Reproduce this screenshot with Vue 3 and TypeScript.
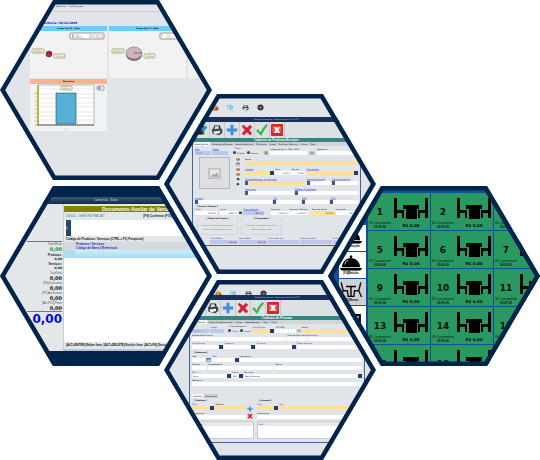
<script setup lang="ts">
import { h, type FunctionalComponent } from 'vue'

type Kind = 'text' | 'select' | 'lookup' | 'gap' | 'radios' | 'icon'
interface Field {
  w: number
  kind: Kind
  label?: string
  tone?: string
  value?: string
  link?: boolean
  options?: string[]
}

const f = (w: number, label: string, kind: Kind = 'text', tone = '', value = '', link = false): Field => ({ w, kind, label, tone, value, link })
const gap = (w: number): Field => ({ w, kind: 'gap' })
const icon = (w: number, name: string): Field => ({ w, kind: 'icon', value: name })
const radios = (w: number, label: string, options: string[]): Field => ({ w, kind: 'radios', label, options })

const FieldRow: FunctionalComponent<{ fields: Field[] }> = (props) =>
  h('div', { class: 'frow' }, props.fields.map((field) => {
    const style = { flexGrow: field.w }
    if (field.kind === 'gap') return h('span', { class: 'cell', style })
    if (field.kind === 'icon') {
      return h('span', { class: 'cell mini', style }, [h('svg', { viewBox: '0 0 16 16' }, [h('use', { href: '#' + field.value })])])
    }
    if (field.kind === 'radios') {
      return h('fieldset', { class: 'cell radios', style }, [
        h('legend', field.label),
        h('div', (field.options ?? []).map((o, i) =>
          h('label', [h('input', { type: 'radio', name: field.label, checked: i === 0 }), o]))),
      ])
    }
    const control = field.kind === 'select'
      ? h('select', { class: field.tone }, [h('option', field.value)])
      : h('input', { class: [field.tone, field.kind], type: 'text', value: field.value })
    return h('label', { class: ['cell', { link: field.link }], style }, [h('span', field.label), control])
  }))
FieldRow.props = ['fields']

const productHead: Field[] = [
  f(16, 'Item', 'text', 'blue', '  1 / 7', true), f(16, 'Código', 'text', 'blue', '', true), gap(2),
  radios(27, '[ Tipo ]', ['Produto', 'Serviço']), gap(1), icon(7, 'box'),
  f(37, 'Código de Barra / EAN / GTIN'), icon(8, 'card'), f(39, 'Referência'), gap(1),
]
const productMain: Field[][] = [
  [f(114, 'Nome', 'text', 'yellow')],
  [f(29, 'Unidade', 'select', 'yellow', '', true), f(15, 'Peso', 'text', 'right', '0,0000'), f(14, 'Volume', 'text', 'right', '0,0000'), f(51, 'Tipo do Item', 'select', 'yellow', '', true)],
  [f(60, 'Grupo/SubGrupo - Classificação', 'lookup', 'yellow', '', true), f(24, 'Plano de Conta (E)', 'lookup', '', '', true), f(26, 'Plano de Conta (S)', 'lookup', '', '', true)],
  [f(49, 'Fabricante', 'lookup', '', '', true), f(63, 'Modelo / Embalagem', 'lookup', '', '', true)],
]
const productTax: Field[] = [f(76, 'Imposto', 'lookup', '', '', true), f(27, 'CST', 'lookup', '', '', true), f(27, 'NCM', 'lookup', '', '', true), f(27, 'CEST', 'lookup', '', '', true)]
const productPrice: Field[] = [
  f(21, 'Custo', 'text', 'right', 'R$ 0,00'), gap(1), f(17, 'Lucro', 'text', 'right', '0,0000 %'), icon(3, 'calc'),
  f(20, 'Preço Sugerido', 'text', 'blue right', 'R$ 0,00', true), gap(4), f(17, 'Comissão', 'text', 'right', '0,0000 %'), f(17, 'Desconto Máximo', 'text', 'right', '0,0000 %'), gap(2),
  f(22, 'Preço de Venda', 'text', 'yellow right', 'R$ 0,00'), f(21, 'Promoção', 'text', 'right', 'R$ 0,00'),
]
const productAverage: Field[] = [
  f(24, 'Custo Médio', 'text', 'blue right', 'R$ 0,00'), f(24, 'Preço Médio', 'text', 'blue right', 'R$ 0,00'), f(27, 'Custo (Atacado)', 'text', 'blue'),
  f(27, 'Preço (Atacado)', 'text', 'blue'), f(27, 'Promoção (Atacado)', 'text', 'blue'),
]

const peopleMain: Field[][] = [
  [f(17, '', 'text', 'blue', '  1 / 7'), f(14, 'Código', 'text', 'blue', '', true), gap(1), radios(24, '[ Tipo de Pessoa ]', ['Física', 'Jurídica']),
    f(22, 'Classificação', 'select', 'yellow', '', true), f(20, 'CPF/CNPJ'), icon(4, 'card'), f(60, 'Nome', 'text', 'yellow')],
  [f(95, 'Apelido/Razão Social'), f(20, 'Data de Nascimento', 'text', '', '  /  /'), f(54, 'Marketing', 'text', '', '', true)],
  [f(31, 'Contribuinte', 'select', '', '', true), f(31, 'Categoria', 'select', '', '', true), f(39, 'Convênio', 'select', '', '', true), f(65, 'Tabela de Preço', 'text', '', '', true)],
]
const peopleAddress: Field[][] = [
  [f(13, 'Cep'), icon(5, 'folder'), f(26, 'Tipo', 'select', '', '', true), f(121, 'Logradouro')],
  [f(15, 'Número'), f(65, 'Complemento'), f(85, 'Bairro')],
  [f(38, 'País', 'select', '', 'Brasil', true), f(11, 'Estado', 'select', '', 'MG', true), f(116, 'Município', 'select', '', 'Belo Horizonte', true)],
  [f(168, 'Referência')],
]
const phone: Field[][] = [[f(21, 'Tipo', 'select', 'yellow', '', true), f(29, 'Telefone', 'text', 'yellow')], [f(51, 'Observação')]]
const internet: Field[][] = [[f(21, 'Tipo', 'select', 'yellow', '', true), f(82, 'Link', 'text', 'yellow')], [f(104, 'Observação')]]

const tools = ['brush', 'printer', 'plus', 'cross', 'check', 'exit']
const shortcuts = ['coin', 'people', 'printer', 'gear']
const photoTools = ['coin', 'folder', 'coin', 'coin', 'back', 'next']
const productTabs = ['Dados Básicos', 'Observação/Estoque', 'Imposto/Adicional', 'Tributação', 'Grade', 'Similares / Balança', 'Outros', 'Tag/s']
const peopleTabs = ['Dados Básicos', 'Dados Complementares', 'Outros', 'Dependente(s)', 'Tag/s', 'Fotos']

const totals = [
  { label: 'Total Bruto', value: '0,00', tone: 'green' },
  { label: 'Produtos:', value: '0,00', tone: 'small' },
  { label: 'Serviços:', value: '0,00', tone: 'small' },
  { label: 'SubTotal', value: '0,00', tone: '' },
  { label: '[F6] Desconto', value: '0,00', tone: '' },
  { label: '[F7] Acréscimo', value: '0,00', tone: '' },
  { label: '[Alt+F12] Frete', value: '0,00', tone: '' },
]
const tables = [1, 2, 3, 5, 6, 7, 9, 10, 11, 13, 14, 15, 17, 18, 19]
const modes = [
  { label: '[F3] Estação', icon: 'cloche' },
  { label: '[F4]Balcão', icon: 'cloche' },
  { label: '[F5]Mesas', icon: 'diners', active: true },
  { label: '', icon: 'phone' },
]
</script>

<template>
  <svg class="symbols" aria-hidden="true">
    <symbol id="printer" viewBox="0 0 16 16"><path d="M4 2h8l1 5H3z" fill="#252b30" /><path d="M1 7q7-5 14 0v5l-4 3-9-2z" fill="#42494e" /><path d="M5 3h5l1 3-6 1z" fill="#d7dcdf" /><path d="M3 10l9-1v3l-7 2z" fill="#f4f4f4" /></symbol>
    <symbol id="brush" viewBox="0 0 16 16"><path d="M2 2h9v12H2z" fill="#4c5154" /><path d="M7 6l6-4 2 3-5 5z" fill="#2f8fd0" /><path d="M3 10h5v4H3z" fill="#222" /></symbol>
    <symbol id="plus" viewBox="0 0 16 16"><path d="M6 1h4v5h5v4h-5v5H6v-5H1V6h5z" fill="#3f8ee0" /></symbol>
    <symbol id="cross" viewBox="0 0 16 16"><path d="M1 3l2-2 5 4 4-4 3 3-4 4 4 5-3 2-4-4-4 4-3-2 4-5z" fill="#d2232a" /></symbol>
    <symbol id="check" viewBox="0 0 16 16"><path d="M0 9l3-2 3 4Q9 4 14 0l2 2Q10 8 7 16z" fill="#3fb54a" /></symbol>
    <symbol id="exit" viewBox="0 0 16 16"><rect width="16" height="16" rx="1" fill="#d8262c" /><path d="M2 3h12v9H2z" fill="#e9554f" /><path d="M4 4h3l1 2 1-2h3l-2 4 2 4H9L8 10l-1 2H4l2-4z" fill="#fff" /></symbol>
    <symbol id="coin" viewBox="0 0 16 16"><ellipse cx="8" cy="10" rx="7" ry="5" fill="#9b4c1c" /><path d="M4 3l8 1 2 5H3z" fill="#e98b3c" /><circle cx="6" cy="11" r="2" fill="#f6d27a" /></symbol>
    <symbol id="people" viewBox="0 0 16 16"><path d="M1 3h8v7H1z" fill="none" stroke="#7fc6e6" stroke-width="2" /><circle cx="10" cy="7" r="3" fill="none" stroke="#56acd6" stroke-width="2" /><path d="M5 15q5-7 10 0z" fill="#8fd3b4" /></symbol>
    <symbol id="gear" viewBox="0 0 16 16"><circle cx="8" cy="8" r="7" fill="#34383b" /><circle cx="8" cy="8" r="3" fill="#8a6f69" /></symbol>
    <symbol id="back" viewBox="0 0 16 16"><path d="M2 8l7-6v4h5v5H9v4z" fill="#222" /></symbol>
    <symbol id="next" viewBox="0 0 16 16"><path d="M14 8L7 2v4H2v5h5v4z" fill="#222" /></symbol>
    <symbol id="box" viewBox="0 0 16 16"><path d="M1 4h14v11H1z" fill="#c9cdbb" stroke="#8e9590" /><path d="M4 7h8v6H4z" fill="#6b9a54" /><path d="M6 3h4v4H6z" fill="#c18a4b" /></symbol>
    <symbol id="card" viewBox="0 0 16 16"><path d="M0 5h16v9H0z" fill="#cdd1d4" stroke="#8b9196" /><path d="M3 8h10v3H3z" fill="#a8575a" /></symbol>
    <symbol id="calc" viewBox="0 0 16 16"><path d="M0 4h16v10H0z" fill="#333" /></symbol>
    <symbol id="folder" viewBox="0 0 16 16"><path d="M1 3h14v11H1z" fill="#3b74bd" /><path d="M4 8h10v5H4z" fill="#cfe2f4" /></symbol>
    <symbol id="seats" viewBox="0 0 34 22"><path d="M0 0h3v12h7v8H8v-5H3v5H0zM34 0h-3v12h-7v8h2v-5h5v5h3zM9 7h16v4h-2v10H12V11H9z" /></symbol>
    <symbol id="diners" viewBox="0 0 34 22"><path d="M3 0l3 12h6l1 9M6 12L2 21M31 0l-3 12h-6l-1 9M28 12l4 9" fill="none" stroke="#111" stroke-width="2" /><path d="M10 5h14v2h-6v12h3v2h-8v-2h3V7h-6z" /></symbol>
    <symbol id="cloche" viewBox="0 0 34 22"><path d="M15 2a2 2 0 0 1 4 0l-1 2Q29 6 30 17H4Q5 6 16 4zM1 18h32l-3 4H4z" /><path d="M8 13q1-5 5-6" fill="none" stroke="#fff" stroke-width="1" /></symbol>
    <symbol id="phone" viewBox="0 0 34 22"><path d="M11 4h20v18H11z" /><path d="M14 7h14v3H14zM14 12h3v3h-3zM20 12h3v3h-3zM25 12h3v3h-3z" fill="#fff" /></symbol>
  </svg>

  <main class="collage">
    <div class="column">
      <section class="hex dash">
        <nav><span>Relatórios</span><span>Configurações</span></nav>
        <p class="ref">Referência: 30/12/1899</p>
        <div class="cards">
          <article class="card">
            <h3>Grupo Top 10 - Valor</h3>
            <svg viewBox="0 0 77 47">
              <rect x="40" y="2" width="34" height="6" rx="1" fill="#fff" stroke="#555" />
              <path d="M42 4h2" stroke="#8c1d38" /><path d="M42 6h2" stroke="#111" />
              <text x="45" y="5" class="t2 wine">OUR</text><text x="73" y="5" class="t2 wine end">R$ 17.230,00</text>
              <text x="45" y="7" class="t2 wine">VARIOS</text><text x="73" y="7" class="t2 wine end">R$ 10.200,00</text>
              <circle cx="19" cy="23" r="3" fill="#b42847" stroke="#641829" /><path d="M19 22h3" stroke="#431321" />
              <g fill="#fffbd8" stroke="#77775f"><rect x="2" y="18" width="12" height="4" rx="1" /><rect x="24" y="23" width="11" height="4" rx="1" /></g>
              <text x="4" y="21" class="t2">99,97 %</text><text x="26" y="26" class="t2">0,03 %</text>
            </svg>
          </article>
          <article class="card">
            <h3>Grupo Top 10 - Qtde</h3>
            <svg viewBox="0 0 77 47">
              <rect x="51" y="2" width="34" height="6" rx="1" fill="#fff" stroke="#555" /><text x="57" y="5" class="t2 lime">OUR</text><text x="57" y="7" class="t2 lime">VARIOS</text>
              <path d="M52 4h2" stroke="#776" /><path d="M52 6h2" stroke="#c0dd35" />
              <ellipse cx="25" cy="24" rx="8" ry="6" fill="#806e75" /><ellipse cx="25" cy="22" rx="8" ry="6" fill="#cdb3bc" stroke="#806e75" /><path d="M25 22h8" stroke="#45393e" />
              <g fill="#fffbd8" stroke="#77775f"><rect x="3" y="18" width="12" height="4" rx="1" /><rect x="35" y="23" width="11" height="4" rx="1" /></g>
              <text x="5" y="21" class="t2">98,75 %</text><text x="37" y="26" class="t2">1,25 %</text>
            </svg>
          </article>
          <article class="card"><h3></h3></article>
          <article class="card orange">
            <h3>Marketing</h3>
            <svg viewBox="0 0 77 47">
              <path d="M8 1h56v40H8z" fill="#fff" stroke="#888" /><path d="M9 5h55M9 10h55M9 14h55M9 19h55M9 23h55M9 28h55M9 32h55M9 36h55" stroke="#d4d4d4" />
              <path d="M8 1v40" stroke="#b8b43c" stroke-width="2" /><path d="M7 41h57" stroke="#666" stroke-width="1" />
              <path d="M26 9h20v31H26z" fill="#57afd5" stroke="#1b5370" />
              <rect x="31" y="2" width="11" height="4" rx="1" fill="#fffbd8" stroke="#77775f" /><text x="33" y="5" class="t2">100 %</text>
              <rect x="67" y="2" width="7" height="4" rx="1" fill="#fff" stroke="#555" /><path d="M68 4h3" stroke="#57afd5" stroke-width="2" />
              <g class="t2"><text v-for="n in 9" :key="n" x="5" :y="46 - n * 4">{{ n - 1 }}</text><text x="35" y="46">0</text></g>
            </svg>
          </article>
        </div>
        <svg class="edge" viewBox="0 0 212 180" preserveAspectRatio="none"><polygon points="53,0 159,0 212,90 159,180 53,180 0,90" /></svg>
      </section>

      <section class="hex sales">
        <header>Comercial - Sales</header>
        <div class="split">
          <aside>
            <dl>
              <div v-for="t in totals" :key="t.label" :class="t.tone"><dt>{{ t.label }}</dt><dd>{{ t.value }}</dd></div>
            </dl>
            <strong>0,00</strong>
          </aside>
          <div class="sheet">
            <h2>Documento Auxilar de Venda</h2>
            <p class="who"><span>000001 - DEMONSTRACAO</span><b>[F9] Confirmar [F10]</b></p>
            <div class="entry"><i>&gt;_</i></div>
            <label class="code" for="code">Código de Produtos / Serviços (CTRL + F1) Pesquisar)</label>
            <div class="list"><a href="#code">Produtos / Serviços</a><a href="#code">Código de Barra | Referência</a></div>
            <input id="code" class="pick" type="text">
            <div class="blank"></div>
            <p class="keys">[ALT+ENTER] Editar Item&nbsp; [ALT+DELETE] Excluir Item&nbsp; [ALT+F6] Desconto</p>
          </div>
        </div>
        <svg class="edge" viewBox="0 0 212 180" preserveAspectRatio="none"><polygon points="53,0 159,0 212,90 159,180 53,180 0,90" /></svg>
      </section>
    </div>

    <div class="column">
      <section class="hex product">
        <div class="shortcuts"><svg v-for="s in shortcuts" :key="s" viewBox="0 0 16 16"><use :href="'#' + s" /></svg></div>
        <div class="window">
          <header>Solução Comercial - Administrativo (1.0.177)</header>
          <div class="tools"><button v-for="t in tools" :key="t" type="button" :aria-label="t"><svg viewBox="0 0 16 16"><use :href="'#' + t" /></svg></button></div>
          <h2>Cadastro de Produtos/Serviços</h2>
          <div class="tabs"><button v-for="t in productTabs" :key="t" type="button">{{ t }}</button></div>
          <div class="form">
            <FieldRow :fields="productHead" />
            <div class="media">
              <div class="photo"><svg viewBox="0 0 16 14"><path d="M1 1h14v12H1z" fill="#e8e8e8" stroke="#bcbcbc" stroke-width="2" /><path d="M3 11l3-4 2 2 3-4 3 6z" fill="#aaa" /></svg></div>
              <div class="side"><svg v-for="(s, i) in photoTools" :key="i" viewBox="0 0 16 16"><use :href="'#' + s" /></svg></div>
              <div class="stack"><FieldRow v-for="(r, i) in productMain" :key="i" :fields="r" /></div>
            </div>
            <FieldRow :fields="productTax" />
            <h4>[ Preço e Valores ]</h4>
            <FieldRow :fields="productPrice" />
            <div class="notes">
              <fieldset><legend>[ Tabela de Preços ]</legend>Cadastre a Tabela de Preço para<br>que a mesma apareça aqui!</fieldset>
              <fieldset><legend>[ Promoções ]</legend>Cadastre a Promoção para que a<br>mesma apareça aqui!</fieldset>
            </div>
            <div class="average"><FieldRow :fields="productAverage" /></div>
          </div>
        </div>
        <svg class="edge" viewBox="0 0 212 180" preserveAspectRatio="none"><polygon points="53,0 159,0 212,90 159,180 53,180 0,90" /></svg>
      </section>

      <section class="hex people">
        <div class="shortcuts"><svg v-for="s in shortcuts" :key="s" viewBox="0 0 16 16"><use :href="'#' + s" /></svg></div>
        <div class="window">
          <header>Solução Comercial - Administrativo (1.0.177)</header>
          <div class="tools"><button v-for="t in tools" :key="t" type="button" :aria-label="t"><svg viewBox="0 0 16 16"><use :href="'#' + t" /></svg></button></div>
          <h2>Cadastro de Pessoas</h2>
          <div class="tabs"><button v-for="t in peopleTabs" :key="t" type="button">{{ t }}</button></div>
          <div class="form">
            <FieldRow v-for="(r, i) in peopleMain" :key="i" :fields="r" />
            <h4>[ Endereço ]</h4>
            <FieldRow v-for="(r, i) in peopleAddress" :key="'a' + i" :fields="r" />
            <div class="tabs inner"><button type="button">Contatos</button><button type="button">Observação</button></div>
            <div class="contacts">
              <div class="phone">
                <h4>[ Telefone ]</h4>
                <div class="pair">
                  <div class="stack"><FieldRow v-for="(r, i) in phone" :key="i" :fields="r" /></div>
                  <div class="actions">
                    <button type="button" aria-label="Adicionar"><svg viewBox="0 0 16 16"><use href="#plus" /></svg></button>
                    <button type="button" aria-label="Excluir"><svg viewBox="0 0 16 16"><use href="#cross" /></svg></button>
                  </div>
                </div>
                <table><thead><tr><th>Telefone</th></tr></thead><tbody><tr><td></td></tr></tbody></table>
              </div>
              <div class="net">
                <h4>[ Internet ]</h4>
                <div class="stack"><FieldRow v-for="(r, i) in internet" :key="i" :fields="r" /></div>
                <table><thead><tr><th>Link</th></tr></thead><tbody><tr><td></td></tr></tbody></table>
              </div>
            </div>
          </div>
        </div>
        <svg class="edge" viewBox="0 0 212 180" preserveAspectRatio="none"><polygon points="53,0 159,0 212,90 159,180 53,180 0,90" /></svg>
      </section>
    </div>

    <div class="column">
      <section class="hex tables">
        <div class="modes">
          <button v-for="(m, i) in modes" :key="i" type="button" :class="{ active: m.active }"><svg viewBox="0 0 34 22"><use :href="'#' + m.icon" /></svg>{{ m.label }}</button>
        </div>
        <div class="board">
          <button v-for="n in tables" :key="n" type="button">
            <b>{{ n }}</b><svg viewBox="0 0 34 22"><use href="#seats" /></svg>
            <span class="last">Últ. Lançamento<em>00:00:00</em></span><span class="sum">R$ 0,00</span>
          </button>
        </div>
        <svg class="edge" viewBox="0 0 212 180" preserveAspectRatio="none"><polygon points="53,0 159,0 212,90 159,180 53,180 0,90" /></svg>
      </section>
    </div>
  </main>
</template>

<style>
body { margin: 0; background: #fff; }
</style>

<style scoped>
* { box-sizing: border-box; }
h2, h3, h4, p, dl, dd { margin: 0; }
button { padding: 0; border: 0; background: none; font: inherit; color: inherit; }
.symbols { position: absolute; width: 0; height: 0; }
.collage { display: flex; align-items: center; justify-content: center; font: 2px/4px "DejaVu Sans", Verdana, sans-serif; color: #111; }
.column { display: flex; flex-direction: column; gap: 6px; flex: none; }
.column + .column { margin-left: -48px; }
.column:nth-child(1) { align-self: flex-start; }
.column:nth-child(2) { padding-top: 94px; }
.column:nth-child(3) { padding-top: 92px; }
.hex { position: relative; display: flex; flex-direction: column; width: 212px; height: 180px; overflow: hidden; background: #e1e5e9; clip-path: polygon(25% 0, 75% 0, 100% 50%, 75% 100%, 25% 100%, 0 50%); }
.edge { position: absolute; inset: 0; width: 100%; height: 100%; pointer-events: none; }
.edge polygon { fill: none; stroke: #00244b; stroke-width: 9; }

/* dashboard */
.dash nav { display: flex; gap: 3px; height: 11px; padding: 4px 0 0 56px; }
.ref { padding: 8px 0 0 38px; height: 15px; border-top: 1px solid #cbd0d4; font: bold 3px/6px "DejaVu Sans", sans-serif; color: #1010f0; }
.cards { display: grid; grid-template-columns: repeat(3, 77px); gap: 1px 2px; padding-left: 30px; }
.card { height: 52px; background: #f2f2f2; }
.card h3 { height: 5px; background: #6ccbff; font: bold 2px/5px "DejaVu Sans", sans-serif; text-align: center; color: #012; }
.card.orange h3 { background: #ffb08c; color: #411; }
.card svg { display: block; width: 77px; height: 47px; stroke-width: 0.6; }
.card text { stroke: none; }
.t2 { font-size: 2px; fill: #333; }
.t2.end { text-anchor: end; }
.t2.wine { fill: #c04060; }
.t2.lime { fill: #a7c43a; }

/* sales */
.sales { background: #00244b; padding: 11px 0 15px; }
.sales header { height: 7px; background: linear-gradient(#3b5777, #12294a); color: #d5deea; font: 3px/7px "Liberation Sans", sans-serif; text-align: center; }
.split { display: flex; flex: 1; background: #e3e7ea; }
.sales aside { width: 64px; padding: 37px 1px 0 27px; text-align: right; font: 3px/4px "Liberation Sans", sans-serif; border-right: 1px solid #c5cdd3; }
dl { border-top: 1px solid #777; border-bottom: 1px solid #777; }
dl div { height: 10px; }
dt { color: #555; height: 4px; white-space: nowrap; }
dd { font: bold 5px/6px "DejaVu Sans", sans-serif; color: #111; }
dl .green { height: 11px; }
.green dd { color: #0a9220; line-height: 7px; }
dl .small { height: 9px; }
.small dt { font-weight: bold; color: #222; }
.small dd { font-size: 3px; line-height: 4px; }
aside strong { display: flex; justify-content: flex-end; font: bold 12px/15px "DejaVu Sans", sans-serif; color: #0505ee; }
.sheet { flex: 1; display: flex; flex-direction: column; padding-top: 2px; }
.sheet h2 { height: 6px; padding-left: 38px; background: #838300; color: #ffe; font: bold 5px/6px "Liberation Sans", sans-serif; white-space: nowrap; }
.who { display: flex; justify-content: space-between; height: 8px; padding: 0 40px 0 2px; font: 3px/8px "Liberation Sans", sans-serif; color: #288d95; }
.who b { color: #222; }
.entry { height: 16px; background: #fff; padding-left: 2px; }
.entry i { display: block; width: 5px; height: 16px; background: #24476b; color: #fff; font: bold 3px/16px "Liberation Sans", sans-serif; }
.code { height: 6px; padding-left: 2px; font: bold 3px/6px "Liberation Sans", sans-serif; }
.list { display: flex; flex-direction: column; height: 8px; padding-left: 12px; background: #d6d9df; }
.list a { font: bold 3px/4px "Liberation Sans", sans-serif; color: #2a2ab0; text-decoration: none; }
.pick { height: 8px; border: 0; border-left: 11px solid #aadff0; background: linear-gradient(#cbeefa, #a5dcef); padding: 0; font-size: 3px; }
.blank { flex: 1; background: #fff; }
.keys { height: 9px; padding-left: 2px; border-bottom: 2px solid #b9c4cd; font: bold 3px/7px "Liberation Sans", sans-serif; white-space: nowrap; }

/* registration windows */
.shortcuts { display: flex; gap: 8px; height: 23px; padding: 10px 0 0 48px; }
.shortcuts svg { width: 7px; height: 7px; }
.shortcuts svg:nth-child(2) { margin-right: 0; }
.window { display: flex; flex-direction: column; width: 169px; margin-left: 28px; border: 1px solid #42658d; border-top: 0; }
.window header { height: 5px; background: #17315a; color: #d6deea; line-height: 5px; text-align: center; }
.tools { display: flex; height: 16px; padding-left: 2px; background: #dde1e4; }
.tools button { display: grid; place-items: center; width: 15px; border-right: 1px solid #c3c9ce; }
.tools svg { width: 12px; height: 12px; }
.window h2 { height: 4px; background: #398380; color: #fff; font: bold 3px/4px "Liberation Sans", sans-serif; text-align: center; }
.tabs { display: flex; gap: 1px; height: 4px; background: #d2d6da; white-space: nowrap; }
.tabs button { padding: 0 1px; line-height: 4px; background: #cbcfd3; }
.tabs button:first-child { background: #f4f6f8; }
.form { display: flex; flex-direction: column; gap: 1px; padding: 1px 2px; }
.form h4 { margin: -1px 0 -2px 2px; font: bold 2px/4px "DejaVu Sans", sans-serif; white-space: nowrap; }
:deep(.frow) { display: flex; gap: 1px; height: 8px; width: 100%; }
:deep(.cell) { display: flex; flex-direction: column; flex: 1 1 0; min-width: 0; white-space: nowrap; }
:deep(.cell > span) { height: 4px; line-height: 4px; }
:deep(.cell.link > span) { color: #1c1ce0; }
.product :deep(.cell.link > span) { text-decoration: underline 1px #a4a4ec; text-underline-offset: 0; }
:deep(.cell > input), :deep(.cell > select) { width: 100%; height: 4px; min-width: 0; margin: 0; padding: 0 1px; border: 0; border-radius: 0; outline: 0; appearance: none; background-color: #fff; font: 2px/4px "DejaVu Sans", Verdana, sans-serif; color: #111; box-sizing: border-box; }
:deep(.cell > .blue) { background-color: #b9c9ec; }
:deep(.cell > .yellow) { background-color: #ffe197; }
:deep(.cell > .right) { text-align: right; }
:deep(.cell > select) { background-image: linear-gradient(#243f63, #243f63); background-size: 4px 4px; background-repeat: no-repeat; background-position: right; }
:deep(.cell > .lookup) { background-image: linear-gradient(#3d5b7d, #3d5b7d); background-size: 3px 4px; background-repeat: no-repeat; background-position: left; }
:deep(.mini) { justify-content: flex-end; align-items: center; }
:deep(.mini svg) { width: 100%; max-width: 6px; height: 5px; }
:deep(.radios) { margin: 0; padding: 0; border: 0; }
:deep(.radios legend) { height: 3px; padding: 0 0 0 2px; line-height: 3px; }
:deep(.radios div) { display: flex; gap: 1px; }
:deep(.radios label) { display: flex; align-items: center; height: 5px; }
:deep(.radios input) { appearance: none; width: 3px; height: 3px; margin: 0 1px; border-radius: 50%; background: #2b4a73; }
.media { display: flex; gap: 6px; padding: 1px 0 0 4px; }
.photo { display: grid; place-items: center; width: 31px; height: 32px; background: #dedfe0; border: 1px solid #b5b8ba; }
.photo svg { width: 13px; height: 11px; }
.side { display: flex; flex-direction: column; gap: 1px; width: 4px; margin-right: -1px; }
.side svg { width: 4px; height: 4px; }
.stack { display: flex; flex-direction: column; gap: 1px; flex: 1; min-width: 0; }
.media .stack { gap: 2px; }
.notes { display: flex; gap: 3px; padding-left: 2px; }
.notes fieldset { width: 41px; height: 19px; margin: 0; padding: 3px 0 0; border: 1px solid #d3d7da; border-top: 0; text-align: center; color: #777; white-space: nowrap; }
.notes legend { padding: 0; color: #111; font-weight: bold; height: 4px; }
.average { padding-left: 15px; margin-right: -6px; color: #2a2aa8; }

.people .shortcuts { height: 15px; padding-left: 51px; }
.people .window { width: 176px; margin-left: 25px; }
.people .tools { padding-left: 0; }
.people .tools button:first-child { width: 16px; }
.people .form { gap: 0; padding-bottom: 3px; }
.people .form h4 { margin: 1px 0 0 2px; }
.tabs.inner { background: none; margin-top: 8px; }
.contacts { display: flex; gap: 3px; }
.contacts .stack { flex: none; }
.people .contacts h4 { margin-top: 0; }
.phone { width: 62px; }
.net { flex: 1; }
.pair { display: flex; gap: 1px; }
.pair .stack { flex: 1; }
.actions { display: flex; flex-direction: column; justify-content: flex-end; gap: 1px; width: 7px; }
.actions button, .actions svg { display: block; width: 6px; height: 6px; }
table { width: 100%; margin-top: 2px; border-collapse: collapse; background: #fff; border: 1px solid #c6cbd0; }
th { height: 4px; padding: 0 1px; background: #e5e8eb; text-align: left; font: 2px/4px "DejaVu Sans", sans-serif; }
td { height: 12px; padding: 0; }

/* restaurant tables */
.tables { flex-direction: row; padding: 7px 0 0 11px; background: #125096; }
.modes { display: flex; flex: none; flex-direction: column; gap: 1px; width: 27px; padding-top: 32px; }
.modes button { display: flex; flex-direction: column; align-items: center; justify-content: center; gap: 1px; height: 26px; padding-right: 3px; flex: none; background: #fff; font: bold 3px/3px "Liberation Sans", sans-serif; white-space: nowrap; }
.modes .active { background: #cfd0d2; }
.modes svg { width: 24px; height: 16px; }
.board { display: grid; flex: none; grid-template-columns: repeat(3, 62px); grid-auto-rows: 37px; gap: 1px; padding-left: 2px; }
.board button { display: grid; grid-template-columns: 24px 38px; grid-template-rows: 28px 9px; justify-items: center; background: #2a9961; color: #06110b; font-family: "DejaVu Sans", sans-serif; }
.board b { align-self: center; padding-top: 9px; font-size: 9px; line-height: 10px; }
.board svg { width: 34px; height: 22px; margin-top: 5px; }
.last { font: 3px/4px "Liberation Sans", sans-serif; white-space: nowrap; }
.last em { display: block; font-style: normal; font-weight: bold; }
.sum { padding-top: 2px; font-size: 4px; line-height: 6px; font-weight: bold; }
</style>
